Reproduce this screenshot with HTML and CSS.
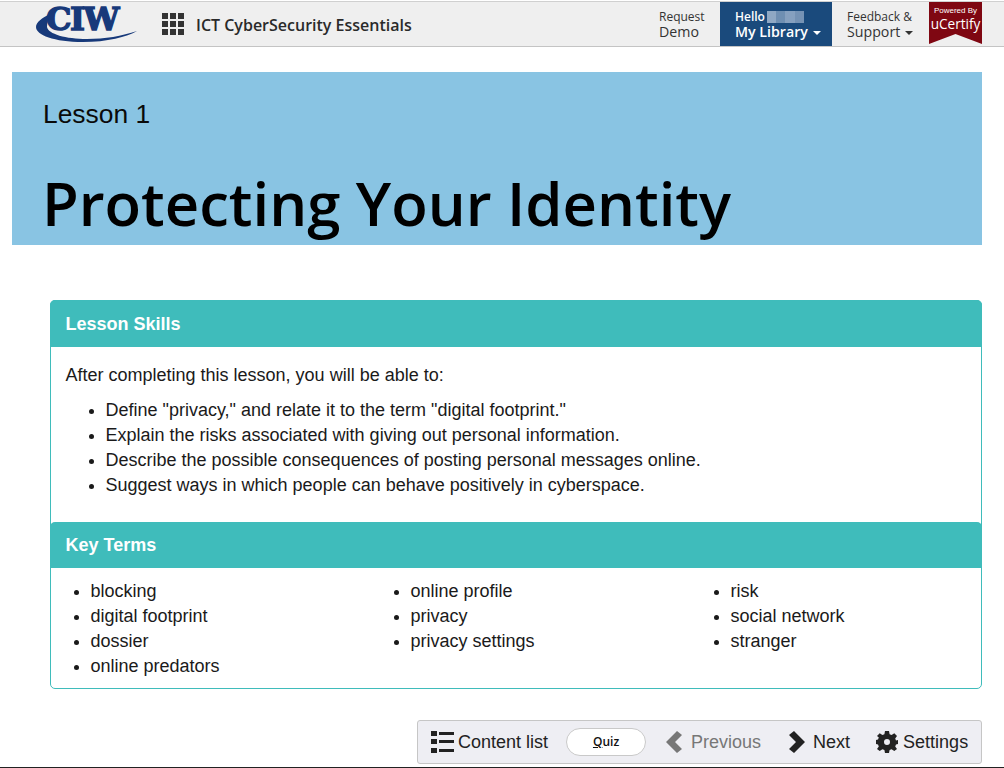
FILE: index.html
```html
<!DOCTYPE html>
<html lang="en">
<head>
<meta charset="utf-8">
<title>Protecting Your Identity</title>
<link rel="stylesheet" href="styles.css">
</head>
<body>
<header class="topbar">
  <div class="logo">
    <span class="logo-text">CIW</span>
    <svg class="swoosh" width="102" height="30" viewBox="0 0 102 30"><path d="M14 0C6 4 0 8 0 13c0 8 18 15 47 15 24 0 44-5 54-11-15 5-32 8-50 8C30 25 12 20 11 13c0-4 1-8 3-13z" fill="#17397a"/></svg>
  </div>
  <svg class="apps" width="22" height="22" viewBox="0 0 22 22" fill="#333"><rect x="0" y="0" width="6" height="6"/><rect x="8" y="0" width="6" height="6"/><rect x="16" y="0" width="6" height="6"/><rect x="0" y="8" width="6" height="6"/><rect x="8" y="8" width="6" height="6"/><rect x="16" y="8" width="6" height="6"/><rect x="0" y="16" width="6" height="6"/><rect x="8" y="16" width="6" height="6"/><rect x="16" y="16" width="6" height="6"/></svg>
  <div class="course">ICT CyberSecurity Essentials</div>
  <nav class="topnav">
    <a class="navitem demo"><span class="sm">Request</span><span class="lg">Demo</span></a>
    <a class="navitem library"><span class="sm hello">Hello <i class="blur"></i></span><span class="lg">My Library <b class="caret"></b></span></a>
    <a class="navitem support"><span class="sm">Feedback &amp;</span><span class="lg">Support <b class="caret"></b></span></a>
    <div class="ribbon"><span class="pb">Powered By</span><span class="uc">uCertify</span></div>
  </nav>
</header>

<section class="hero">
  <div class="lesson">Lesson 1</div>
  <h1>Protecting Your Identity</h1>
</section>

<section class="card">
  <h2 class="card-head">Lesson Skills</h2>
  <div class="skills">
    <p>After completing this lesson, you will be able to:</p>
    <ul>
      <li>Define "privacy," and relate it to the term "digital footprint."</li>
      <li>Explain the risks associated with giving out personal information.</li>
      <li>Describe the possible consequences of posting personal messages online.</li>
      <li>Suggest ways in which people can behave positively in cyberspace.</li>
    </ul>
  </div>
  <h2 class="card-head terms-head">Key Terms</h2>
  <div class="terms">
    <ul><li>blocking</li><li>digital footprint</li><li>dossier</li><li>online predators</li></ul>
    <ul><li>online profile</li><li>privacy</li><li>privacy settings</li></ul>
    <ul><li>risk</li><li>social network</li><li>stranger</li></ul>
  </div>
</section>

<div class="dock-row">
  <div class="dock">
    <a class="dock-item list">
      <svg width="23" height="22" viewBox="0 0 23 22" fill="#222"><rect x="0" y="0" width="6" height="5"/><rect x="8" y="1" width="15" height="3"/><rect x="0" y="8" width="6" height="5"/><rect x="8" y="9" width="15" height="3"/><rect x="0" y="17" width="6" height="5"/><rect x="8" y="18" width="15" height="3"/></svg>
      Content list</a>
    <a class="quiz"><u>Q</u>uiz</a>
    <a class="dock-item muted">
      <svg width="17" height="22" viewBox="0 0 17 22" fill="#777"><path d="M11 0l5 4-7 7 7 7-5 4L0 11z"/></svg>
      Previous</a>
    <a class="dock-item next">
      <svg width="17" height="22" viewBox="0 0 17 22" fill="#222"><path d="M6 0L1 4l7 7-7 7 5 4 11-11z"/></svg>
      Next</a>
    <a class="dock-item settings">
      <svg width="22" height="22" viewBox="0 0 22 22" fill="#222"><path fill-rule="evenodd" d="M9 0h4l.6 3.200 2 .8L18.300 2.200 21 5l-1.800 2.600.8 2L22 9v4l-2 .4-.8 2L21 18l-2.700 2-2.700-1.800-2 .8L13 22H9l-.6-3-2-.8L3.700 20 1 18l1.800-2.600-.8-2L0 13V9l2-.4.8-2L1 5l2.700-2.800L6.400 4l2-.8zM11 8a3 3 0 1 0 0 6 3 3 0 0 0 0-6z"/></svg>
      Settings</a>
  </div>
</div>
<div class="rule"></div>
</body>
</html>
```

FILE: styles.css
```css
* { box-sizing: border-box; }
html, body { margin: 0; padding: 0; }
body { height: 768px; overflow: hidden; background: #fff; color: #1a1a1a; font-family: "Liberation Sans", Arial, sans-serif; font-size: 18px; line-height: 25px; }

.topbar { height: 46px; margin-top: 1px; display: flex; align-items: center; background: #efefef; border-top: 1px solid #d0d0d0; border-bottom: 1px solid #c4c4c4; }
.logo { position: relative; width: 162px; height: 44px; flex: none; }
.logo-text { position: absolute; left: 46px; top: 3px; font-family: "DejaVu Serif", serif; font-weight: 700; font-size: 32px; line-height: 28px; color: #17397a; letter-spacing: -1.5px; -webkit-text-stroke: 1.4px #17397a; }
.swoosh { position: absolute; left: 36px; top: 12px; }
.apps { flex: none; }
.course { margin-left: 12px; padding-top: 2px; font-family: "Open Sans", sans-serif; font-weight: 600; font-size: 16px; color: #2a2a2a; }
.topnav { margin-left: auto; display: flex; height: 44px; margin-right: 22px; align-self: flex-start; }
.navitem { display: flex; flex-direction: column; color: #333; font-family: "Open Sans", sans-serif; }
.sm { font-size: 12px; line-height: 14px; margin-top: 8px; }
.lg { font-size: 14.2px; line-height: 16px; }
.demo { width: 61px; }
.library { width: 112px; padding-left: 15px; background: #1a4a7c; color: #fff; font-weight: 600; }
.support { width: 97px; padding-left: 15px; }
.hello { display: flex; align-items: center; gap: 2px; }
.blur { display: block; width: 37px; height: 12px; background: linear-gradient(90deg, #8fa8c4 0 25%, #6f8fb2 25% 50%, #86a0bf 50% 75%, #7592b4 75%); }
.caret { display: inline-block; vertical-align: middle; width: 0; height: 0; border-top: 4px solid currentColor; border-left: 4px solid transparent; border-right: 4px solid transparent; margin-left: 1px; }
.ribbon { width: 53px; height: 42px; background: #7f0712; color: #fff; display: flex; flex-direction: column; align-items: center; clip-path: polygon(0 0, 100% 0, 100% 100%, 50% 76%, 0 100%); font-family: "Open Sans", sans-serif; }
.pb { font-family: "Liberation Sans", sans-serif; font-size: 8px; line-height: 10px; margin-top: 4px; }
.uc { font-size: 13.6px; line-height: 16px; }

.hero { margin: 25px 22px 0 12px; height: 173px; padding: 25px 31px 0; background: #89c4e3; color: #0a0a0a; overflow: hidden; }
.lesson { font-size: 26.4px; line-height: 34px; }
.hero h1 { margin: 32px 0 0 -1px; font-family: "Open Sans", sans-serif; font-weight: 600; font-size: 59.8px; line-height: 80px; color: #000; }

.card { margin: 55px 22px 0 50px; height: 389px; border: 1px solid #3fbcbb; border-radius: 5px; }
.card-head { margin: -1px -1px 0; height: 47px; padding: 1px 16px 0 15.5px; background: #3fbcbb; color: #fff; font-size: 18px; font-weight: 700; line-height: 47px; border-radius: 5px 5px 0 0; }
.skills { height: 175px; padding: 16px 15px 0 14.5px; }
.skills p { margin: 0 0 10px; }
.skills ul { margin: 0; padding-left: 40px; }
.terms-head { margin-top: 0; height: 46px; padding-top: 0; line-height: 46px; }
.terms { display: grid; grid-template-columns: repeat(3, 320px); padding: 11px 0 0 14.5px; }
.terms ul { margin: 0; padding-left: 25px; }

.dock-row { display: flex; justify-content: flex-end; margin: 31px 22px 0 0; }
.dock { width: 565px; height: 44px; display: flex; align-items: center; padding: 0 0 0 13px; background: #eeeef3; border: 1px solid #c6c6c6; border-radius: 3px; }
.dock-item { display: flex; align-items: center; gap: 4px; color: #222; }
.muted { color: #777; }
.dock-item svg { flex: none; }
.quiz { width: 80px; height: 28px; margin: 0 20px 0 18px; border: 1px solid #c9c9c9; border-radius: 14px; background: #fff; font-family: "Open Sans", sans-serif; font-size: 12px; font-weight: 600; line-height: 26px; text-align: center; color: #111; }
.dock-item.muted { gap: 8px; margin-right: 27px; }
.next { gap: 8px; }
.settings { margin-left: 26px; gap: 5px; }
.rule { height: 1px; margin-top: 3px; background: #222; }
```
